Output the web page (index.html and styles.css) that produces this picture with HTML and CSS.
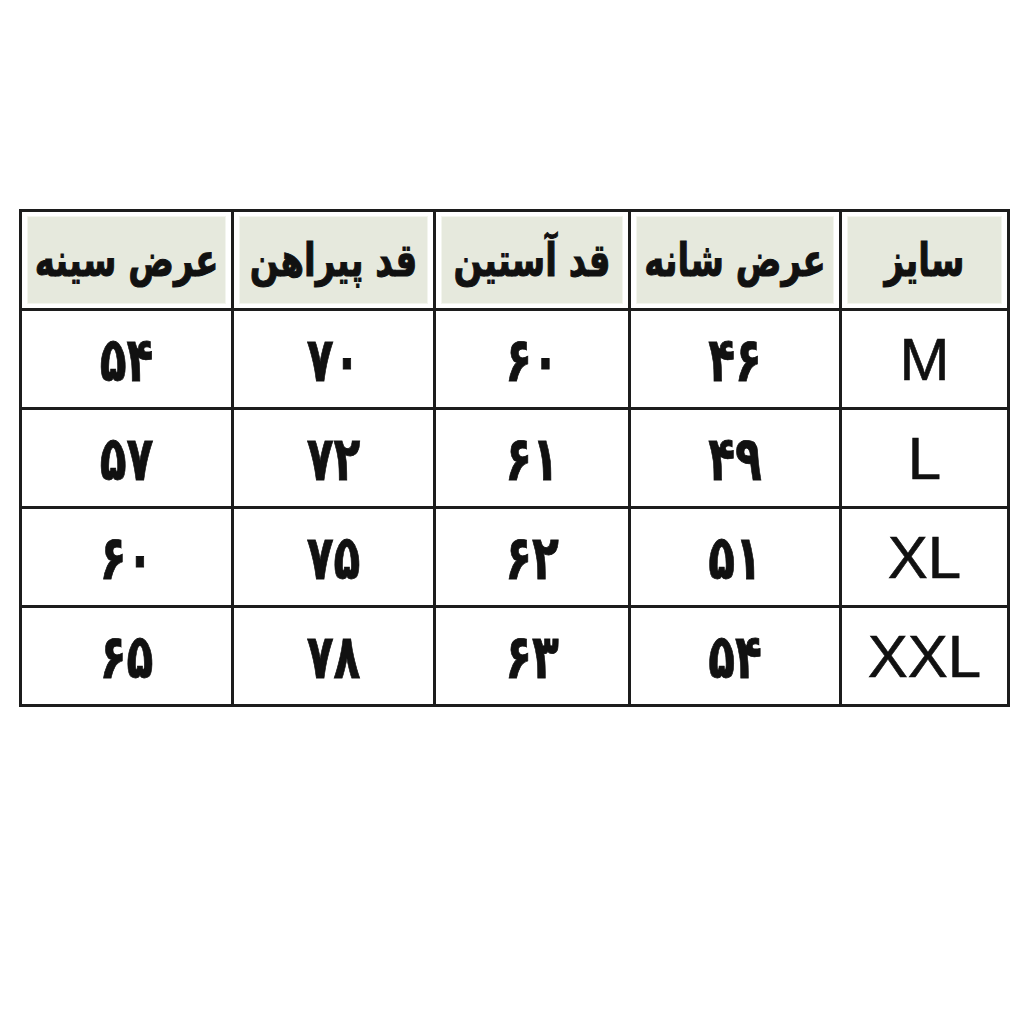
FILE: index.html
```html
<!DOCTYPE html>
<html lang="fa">
<head>
<meta charset="utf-8">
<link rel="stylesheet" href="styles.css">
</head>
<body>
<div class="page">
  <table class="sizes" dir="rtl">
    <colgroup>
      <col class="c-size">
      <col class="c-shoulder">
      <col class="c-sleeve">
      <col class="c-shirt">
      <col class="c-chest">
    </colgroup>
    <thead>
      <tr>
        <th><span class="hcell"><span class="tall">سایز</span></span></th>
        <th><span class="hcell"><span class="tall">عرض شانه</span></span></th>
        <th><span class="hcell"><span class="tall">قد آستین</span></span></th>
        <th><span class="hcell"><span class="tall">قد پیراهن</span></span></th>
        <th><span class="hcell"><span class="tall">عرض سینه</span></span></th>
      </tr>
    </thead>
    <tbody>
      <tr><td class="lat">M</td><td><span class="num">۴۶</span></td><td><span class="num">۶۰</span></td><td><span class="num">۷۰</span></td><td><span class="num">۵۴</span></td></tr>
      <tr><td class="lat">L</td><td><span class="num">۴۹</span></td><td><span class="num">۶۱</span></td><td><span class="num">۷۲</span></td><td><span class="num">۵۷</span></td></tr>
      <tr><td class="lat">XL</td><td><span class="num">۵۱</span></td><td><span class="num">۶۲</span></td><td><span class="num">۷۵</span></td><td><span class="num">۶۰</span></td></tr>
      <tr><td class="lat">XXL</td><td><span class="num">۵۴</span></td><td><span class="num">۶۳</span></td><td><span class="num">۷۸</span></td><td><span class="num">۶۵</span></td></tr>
    </tbody>
  </table>
</div>
</body>
</html>
```

FILE: styles.css
```css
html, body {
  margin: 0;
  background: #ffffff;
}
.page {
  padding: 209px 0 0 19px;
  font-family: "DejaVu Sans", sans-serif;
}
.sizes {
  border-collapse: collapse;
  width: 988px;
  table-layout: fixed;
  border: 3px solid #1c1c1c;
}
.c-size { width: 168px; }
.c-shoulder { width: 211px; }
.c-sleeve { width: 195px; }
.c-shirt { width: 202px; }
.c-chest { width: 212px; }

.sizes th, .sizes td {
  border: 3px solid #1c1c1c;
  text-align: center;
  vertical-align: middle;
  padding: 0;
  color: #111;
}
.sizes th {
  height: 97px;
  padding: 4px 5px;
  box-sizing: border-box;
}
.hcell {
  display: flex;
  align-items: center;
  justify-content: center;
  height: 86px;
  background: #e6e9dd;
  border: 1px solid #f3f5ee;
  font-size: 34px;
  font-weight: bold;
  white-space: nowrap;
}
.tall {
  display: inline-block;
  transform: scaleY(1.35);
  -webkit-text-stroke: 0.8px #111;
}
.sizes td {
  height: 96px;
  font-size: 44px;
  font-weight: bold;
}
.num {
  display: inline-block;
  transform: scaleY(1.4);
  -webkit-text-stroke: 0.6px #111;
}
.sizes td.lat {
  font-family: "Liberation Sans", Arial, sans-serif;
  font-weight: normal;
  font-size: 60px;
  -webkit-text-stroke: 0.6px #111;
}
```
